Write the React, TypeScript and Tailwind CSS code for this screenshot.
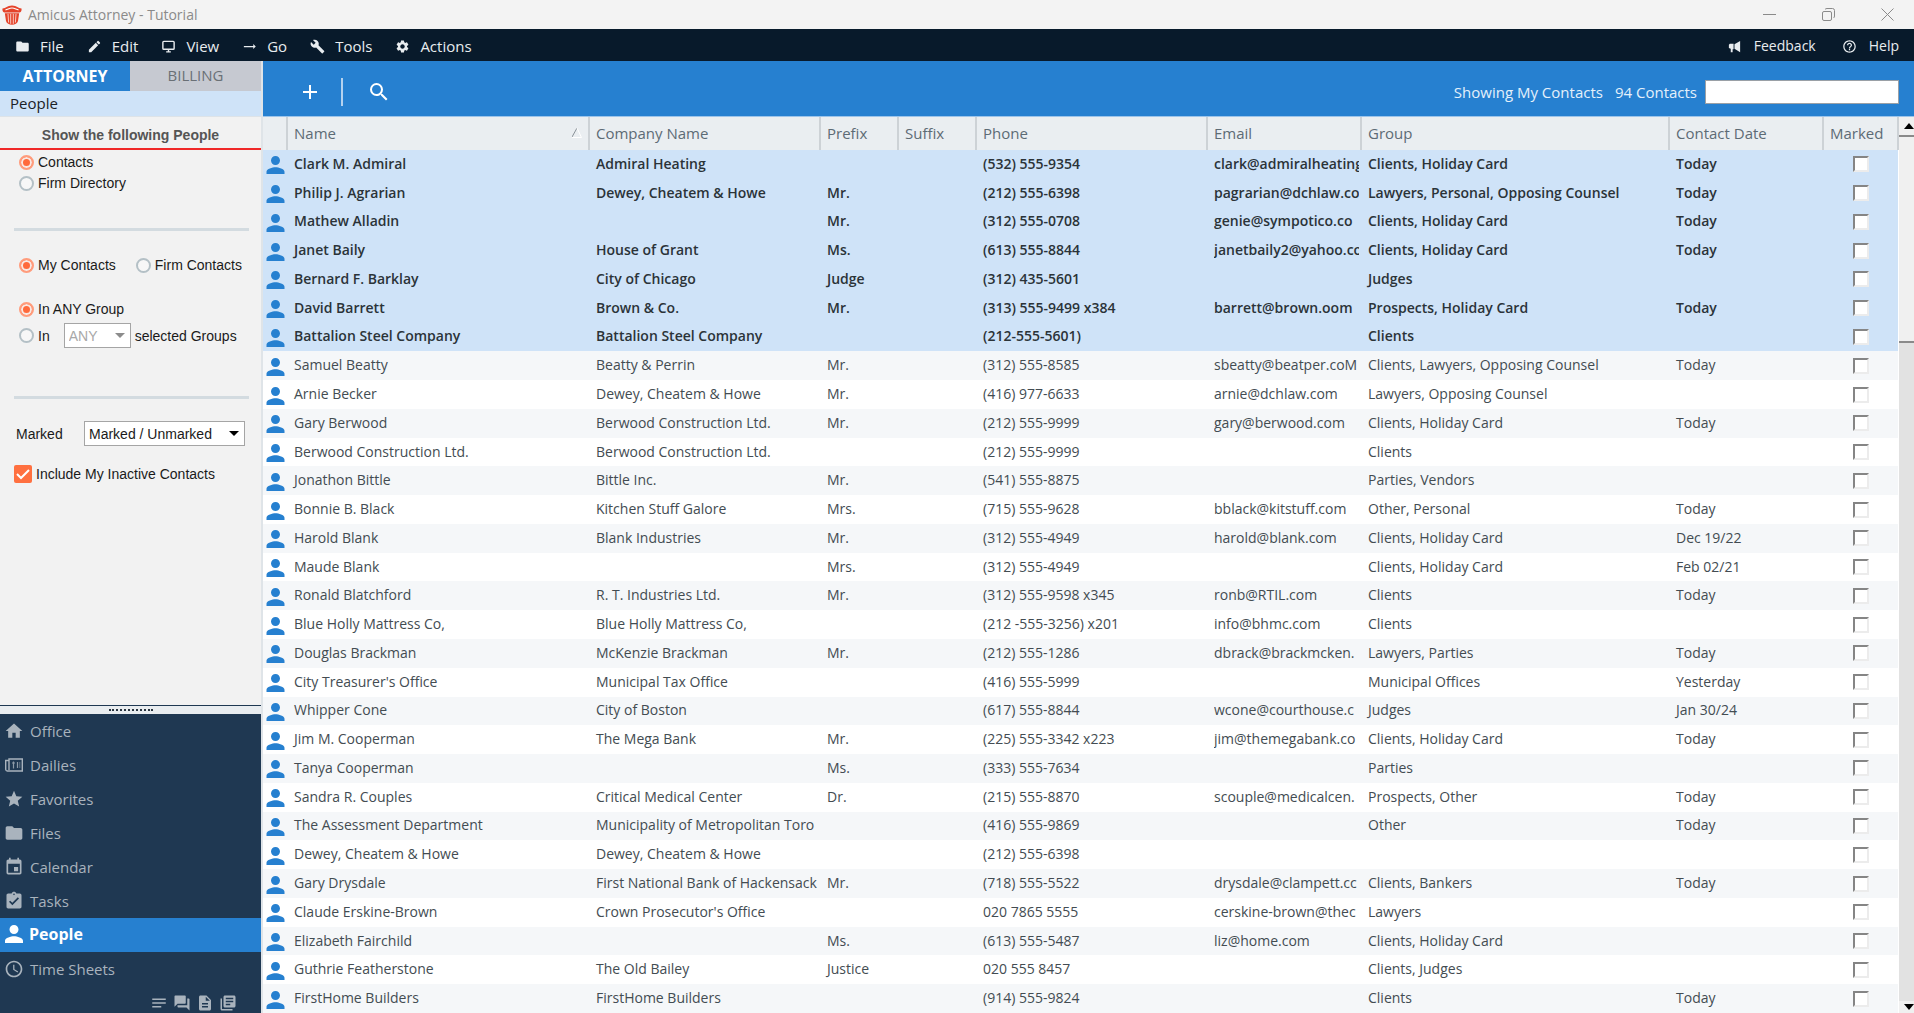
import React from "react";
import {
  MdFolder, MdEdit, MdBuild, MdSettings, MdHelpOutline, MdHome, MdStar, MdEvent,
  MdAssignmentTurnedIn, MdAccessTime, MdForum, MdDescription, MdLibraryBooks,
  MdNotes, MdAdd, MdSearch, MdTrendingFlat,
} from "react-icons/md";

const PERSON = "M12 12c2.21 0 4-1.79 4-4s-1.79-4-4-4-4 1.79-4 4 1.79 4 4 4zm0 2c-2.67 0-8 1.34-8 4v2h16v-2c0-2.66-5.33-4-8-4z";

function Person({ className }: { className: string }) {
  return (
    <svg viewBox="4 4 16 16" className={className} fill="currentColor" aria-hidden="true">
      <path d={PERSON} />
    </svg>
  );
}

function Logo() {
  return (
    <svg viewBox="0 0 20 20" className="size-5" aria-hidden="true">
      <path d="M.5 3.500C4 3.500 5 .5 10 .5s6 3 9.500 3c.4 1.800-.3 3.500-1.800 4H2.300C.8 7 .1 5.300.5 3.500z" fill="#e5432a" />
      <path d="M3.500 4.800C6 4.500 7 3 10 3s4 1.500 6.500 1.800" stroke="#fff" strokeWidth="1.200" fill="none" />
      <path d="M2.800 8.300h14.400l-1.200 7.700c-.8 2.500-3 3.700-6 3.700S4.800 18.500 4 16z" fill="#e5432a" />
      <path d="M6 8.800l.6 8.700M8.700 8.800v10M11.300 8.800v10M14 8.800l-.6 8.700" stroke="#fbd9d2" strokeWidth="0.900" />
    </svg>
  );
}

function Monitor({ className }: { className?: string }) {
  return (
    <svg viewBox="-1 -1 16 16" className={className} fill="none" stroke="currentColor" strokeWidth="1.500" aria-hidden="true">
      <rect x="1" y="1.500" width="12" height="8.500" rx="1" />
      <path d="M7 10v3M4.500 12.700h5" />
    </svg>
  );
}

function Megaphone({ className }: { className?: string }) {
  return (
    <svg viewBox="-1 -1 16 16" className={className} fill="currentColor" aria-hidden="true">
      <path d="M13 1v12L7 9.500v-5zM6 4v6H5v3H3V9.500L1 8.500v-3.500l1-1z" />
    </svg>
  );
}

function Newspaper({ className }: { className?: string }) {
  return (
    <svg viewBox="-1 -2 20 18" className={className} fill="none" stroke="currentColor" strokeWidth="1.400" aria-hidden="true">
      <path d="M4 1h13.300v12H2.500A1.700 1.700 0 0 1 .7 11.500V2.500H4V1zM4 2.500v9.500" />
      <path d="M8.500 3.500v7M7 5h3M12.500 4v6" strokeWidth="1.200" opacity=".8" />
      <path d="M14.800 4v6" strokeWidth="1" opacity=".5" />
    </svg>
  );
}

const menus = [
  { label: "File", Icon: MdFolder },
  { label: "Edit", Icon: MdEdit },
  { label: "View", Icon: Monitor },
  { label: "Go", Icon: MdTrendingFlat },
  { label: "Tools", Icon: MdBuild },
  { label: "Actions", Icon: MdSettings },
];

const nav = [
  { label: "Office", Icon: MdHome },
  { label: "Dailies", Icon: Newspaper },
  { label: "Favorites", Icon: MdStar },
  { label: "Files", Icon: MdFolder },
  { label: "Calendar", Icon: MdEvent },
  { label: "Tasks", Icon: MdAssignmentTurnedIn },
  { label: "People", Icon: Person },
  { label: "Time Sheets", Icon: MdAccessTime },
];

// name, company, prefix, phone, email, group, contact date
const contacts: string[][] = [
  ["Clark M. Admiral", "Admiral Heating", "", "(532) 555-9354", "clark@admiralheating", "Clients, Holiday Card", "Today"],
  ["Philip J. Agrarian", "Dewey, Cheatem & Howe", "Mr.", "(212) 555-6398", "pagrarian@dchlaw.co", "Lawyers, Personal, Opposing Counsel", "Today"],
  ["Mathew Alladin", "", "Mr.", "(312) 555-0708", "genie@sympotico.co", "Clients, Holiday Card", "Today"],
  ["Janet Baily", "House of Grant", "Ms.", "(613) 555-8844", "janetbaily2@yahoo.co", "Clients, Holiday Card", "Today"],
  ["Bernard F. Barklay", "City of Chicago", "Judge", "(312) 435-5601", "", "Judges", ""],
  ["David Barrett", "Brown & Co.", "Mr.", "(313) 555-9499 x384", "barrett@brown.oom", "Prospects, Holiday Card", "Today"],
  ["Battalion Steel Company", "Battalion Steel Company", "", "(212-555-5601)", "", "Clients", ""],
  ["Samuel Beatty", "Beatty & Perrin", "Mr.", "(312) 555-8585", "sbeatty@beatper.coM", "Clients, Lawyers, Opposing Counsel", "Today"],
  ["Arnie Becker", "Dewey, Cheatem & Howe", "Mr.", "(416) 977-6633", "arnie@dchlaw.com", "Lawyers, Opposing Counsel", ""],
  ["Gary Berwood", "Berwood Construction Ltd.", "Mr.", "(212) 555-9999", "gary@berwood.com", "Clients, Holiday Card", "Today"],
  ["Berwood Construction Ltd.", "Berwood Construction Ltd.", "", "(212) 555-9999", "", "Clients", ""],
  ["Jonathon Bittle", "Bittle Inc.", "Mr.", "(541) 555-8875", "", "Parties, Vendors", ""],
  ["Bonnie B. Black", "Kitchen Stuff Galore", "Mrs.", "(715) 555-9628", "bblack@kitstuff.com", "Other, Personal", "Today"],
  ["Harold Blank", "Blank Industries", "Mr.", "(312) 555-4949", "harold@blank.com", "Clients, Holiday Card", "Dec 19/22"],
  ["Maude Blank", "", "Mrs.", "(312) 555-4949", "", "Clients, Holiday Card", "Feb 02/21"],
  ["Ronald Blatchford", "R. T. Industries Ltd.", "Mr.", "(312) 555-9598 x345", "ronb@RTIL.com", "Clients", "Today"],
  ["Blue Holly Mattress Co,", "Blue Holly Mattress Co,", "", "(212 -555-3256) x201", "info@bhmc.com", "Clients", ""],
  ["Douglas Brackman", "McKenzie Brackman", "Mr.", "(212) 555-1286", "dbrack@brackmcken.", "Lawyers, Parties", "Today"],
  ["City Treasurer's Office", "Municipal Tax Office", "", "(416) 555-5999", "", "Municipal Offices", "Yesterday"],
  ["Whipper Cone", "City of Boston", "", "(617) 555-8844", "wcone@courthouse.c", "Judges", "Jan 30/24"],
  ["Jim M. Cooperman", "The Mega Bank", "Mr.", "(225) 555-3342 x223", "jim@themegabank.co", "Clients, Holiday Card", "Today"],
  ["Tanya Cooperman", "", "Ms.", "(333) 555-7634", "", "Parties", ""],
  ["Sandra R. Couples", "Critical Medical Center", "Dr.", "(215) 555-8870", "scouple@medicalcen.", "Prospects, Other", "Today"],
  ["The Assessment Department", "Municipality of Metropolitan Toro", "", "(416) 555-9869", "", "Other", "Today"],
  ["Dewey, Cheatem & Howe", "Dewey, Cheatem & Howe", "", "(212) 555-6398", "", "", ""],
  ["Gary Drysdale", "First National Bank of Hackensack", "Mr.", "(718) 555-5522", "drysdale@clampett.cc", "Clients, Bankers", "Today"],
  ["Claude Erskine-Brown", "Crown Prosecutor's Office", "", "020 7865 5555", "cerskine-brown@thec", "Lawyers", ""],
  ["Elizabeth Fairchild", "", "Ms.", "(613) 555-5487", "liz@home.com", "Clients, Holiday Card", ""],
  ["Guthrie Featherstone", "The Old Bailey", "Justice", "020 555 8457", "", "Clients, Judges", ""],
  ["FirstHome Builders", "FirstHome Builders", "", "(914) 555-9824", "", "Clients", "Today"],
];
const SELECTED = 7;

const columns = ["Name", "Company Name", "Prefix", "Suffix", "Phone", "Email", "Group", "Contact Date", "Marked"];

function Radio({ name, label, checked }: { name: string; label: string; checked?: boolean }) {
  return (
    <label className="flex items-center gap-1 whitespace-nowrap">
      <input
        type="radio"
        name={name}
        defaultChecked={checked}
        className="size-[15px] shrink-0 appearance-none rounded-full border-2 border-[#b4c0c6] bg-[#f7f7f7] checked:border-[#ff9c7c] checked:bg-[#ff6a3c] checked:shadow-[inset_0_0_0_2px_#f9e9e4]"
      />
      {label}
    </label>
  );
}

function Divider() {
  return <div className="h-[3px] bg-[#d3dbe0]" />;
}

function Sidebar() {
  return (
    <aside className="flex w-[263px] shrink-0 flex-col border-r-2 border-[#dfe4e8] bg-[#f2f2f2]">
      <div className="flex h-[30px] shrink-0">
        <button className="flex-1 bg-[#2680d0] text-base font-bold text-white">ATTORNEY</button>
        <button className="w-[131px] bg-[#c6c9d1] pb-0.5 text-[15px] text-[#6a7076]">BILLING</button>
      </div>
      <div className="flex h-[26px] shrink-0 items-center border-b border-[#dde3e8] bg-[#cfe3f8] pb-0.5 pl-2.5 text-[15px] text-[#1b2126]">People</div>
      <h2 className="flex h-[33px] shrink-0 items-center justify-center border-b-2 border-[#f02828] pt-1 font-[Liberation_Sans,sans-serif] text-[14px] font-bold text-[#555]">
        Show the following People
      </h2>
      <div className="flex-1 pr-3 pl-3.5 font-[Liberation_Sans,sans-serif] text-[14px] leading-5 text-[#1a1a1a]">
        <div className="space-y-px px-[5px] pt-0.5 pb-[35px]">
          <Radio name="source" label="Contacts" checked />
          <Radio name="source" label="Firm Directory" />
        </div>
        <Divider />
        <div className="flex gap-5 px-[5px] pt-6 pb-6">
          <Radio name="scope" label="My Contacts" checked />
          <Radio name="scope" label="Firm Contacts" />
        </div>
        <div className="px-[5px] pb-12">
          <Radio name="group" label="In ANY Group" checked />
          <div className="mt-1 flex items-center">
            <Radio name="group" label="In" />
            <div className="relative ml-3.5">
              <select disabled aria-label="Group match" className="h-[25px] w-[67px] appearance-none border border-[#a5a5a5] bg-white pl-1 text-[#a8a8a8]">
                <option>ANY</option>
              </select>
              <svg viewBox="0 0 10 5" className="pointer-events-none absolute top-2.5 right-1.5 h-[5px] w-2.5"><path d="M0 0h10L5 5z" fill="#8c8c8c" /></svg>
            </div>
            <span className="ml-1 whitespace-nowrap">selected Groups</span>
          </div>
        </div>
        <Divider />
        <div className="flex items-center justify-between pt-[22px] pr-1 pl-0.5">
          <label htmlFor="marked">Marked</label>
          <div className="relative">
            <select id="marked" className="h-[25px] w-[161px] appearance-none border border-[#a5a5a5] bg-white pl-1">
              <option>Marked / Unmarked</option>
            </select>
            <svg viewBox="0 0 10 5" className="pointer-events-none absolute top-2.5 right-1.5 h-[5px] w-2.5"><path d="M0 0h10L5 5z" fill="#000" /></svg>
          </div>
        </div>
        <label className="mt-[18px] flex items-center gap-1 whitespace-nowrap">
          <span className="relative flex">
            <input type="checkbox" defaultChecked className="size-[18px] appearance-none rounded-xs bg-[#ff7040]" />
            <svg viewBox="0 0 18 18" className="pointer-events-none absolute inset-0" fill="none" stroke="#fff" strokeWidth="2"><path d="M3 9l4 4 8-8" /></svg>
          </span>
          Include My Inactive Contacts
        </label>
      </div>
      <div className="flex h-[9px] shrink-0 items-center justify-center border-t border-[#1f3852] bg-[#e9edf0]">
        <div className="w-11 border-t-2 border-dotted border-[#2a3540]" />
      </div>
      <nav className="shrink-0 bg-[#1f3852]">
        {nav.map(({ label, Icon }) =>
          label === "People" ? (
            <a key={label} href="#people" className="flex h-[34px] items-center gap-1.5 bg-[#2680d0] pb-0.5 pl-[5px] text-base font-bold text-white">
              <Icon className="size-[18px]" />
              {label}
            </a>
          ) : (
            <a key={label} href="#section" className="flex h-[34px] items-center gap-1.5 pb-px pl-1 text-[15px] text-[#a9b3bd]">
              <Icon className="size-5" />
              {label}
            </a>
          ),
        )}
        <div className="flex h-[27px] items-center justify-end gap-[5px] pt-1.5 pr-6 text-[#a9b3bd]">
          <button aria-label="Notes"><MdNotes className="size-[18px]" /></button>
          <button aria-label="Messages"><MdForum className="size-[18px]" /></button>
          <button aria-label="Documents"><MdDescription className="size-[18px]" /></button>
          <button aria-label="Library"><MdLibraryBooks className="size-[18px]" /></button>
        </div>
      </nav>
    </aside>
  );
}

function ContactTable() {
  const cell = "overflow-hidden pb-px pl-[7px] whitespace-nowrap";
  return (
    <table className="h-full w-full table-fixed border-collapse">
      <colgroup>
        <col className="w-6" />
        <col className="w-[302px]" />
        <col className="w-[231px]" />
        <col className="w-[78px]" />
        <col className="w-[78px]" />
        <col className="w-[231px]" />
        <col className="w-[154px]" />
        <col />
        <col className="w-[154px]" />
        <col className="w-[75px]" />
      </colgroup>
      <thead>
        <tr className="h-[33px] bg-[#eaeef1] text-left text-[15px] text-[#5d6b75]">
          <th aria-label="Type" className="border-r-2 border-[#cdd2d6]" />
          {columns.map((c) => (
            <th key={c} className="border-r-2 border-[#cdd2d6] pb-0.5 pl-1.5 font-normal whitespace-nowrap">
              <div className="flex items-center justify-between pr-1.5">
                {c}
                {c === "Name" && (
                  <svg viewBox="0 0 10 10" className="size-2.5" fill="none"><path d="M5 0L0 9" stroke="#8a9298" /><path d="M5 0l4.500 9.500H0" stroke="#fff" /></svg>
                )}
              </div>
            </th>
          ))}
        </tr>
      </thead>
      <tbody>
        {contacts.map(([name, company, prefix, phone, email, group, date], i) => (
          <tr
            key={i}
            className={
              i < SELECTED
                ? "bg-[#cfe3f8] font-semibold text-[#2b3338]"
                : "text-[#434c52] odd:bg-white even:bg-[#f5f7f9]"
            }
          >
            <td className="pl-[3px] text-[#2680d0]"><Person className="mt-0.5 h-[18px] w-[19px]" /></td>
            <td className={cell}>{name}</td>
            <td className={cell}>{company}</td>
            <td className={cell}>{prefix}</td>
            <td />
            <td className={cell}>{phone}</td>
            <td className={cell}><div className="mr-0.5 overflow-hidden">{email}</div></td>
            <td className={cell}>{group}</td>
            <td className={cell}>{date}</td>
            <td>
              <input
                type="checkbox"
                aria-label={"Mark " + name}
                className="mx-auto block size-4 appearance-none border-2 border-t-[#858585] border-r-[#ececec] border-b-[#ececec] border-l-[#858585] bg-white"
              />
            </td>
          </tr>
        ))}
      </tbody>
    </table>
  );
}

export default function App() {
  return (
    <div className="flex h-screen flex-col overflow-hidden bg-white font-[Open_Sans,sans-serif] text-[14px] leading-5">
      <header className="flex h-[29px] shrink-0 items-center justify-between bg-[#f3f3f3] pr-5 pl-0.5 text-[#8a8a8a]">
        <div className="flex items-center gap-1.5">
          <Logo />
          Amicus Attorney - Tutorial
        </div>
        <div className="flex items-center gap-[46px]">
          <button aria-label="Minimize"><svg viewBox="0 0 13 13" className="size-[13px]" stroke="currentColor"><path d="M0 6.500h13" /></svg></button>
          <button aria-label="Restore"><svg viewBox="0 0 13 13" className="size-[13px]" stroke="currentColor" fill="none"><rect x=".5" y="3.500" width="9" height="9" rx="1.500" /><path d="M3 1.500c.5-.7 1-1 2-1h5.500a2 2 0 0 1 2 2V8c0 1-.3 1.500-1 2" /></svg></button>
          <button aria-label="Close"><svg viewBox="0 0 13 13" className="size-[13px]" stroke="currentColor"><path d="M.5.5l12 12M12.500.5l-12 12" /></svg></button>
        </div>
      </header>
      <nav className="flex h-8 shrink-0 items-center justify-between bg-[#081a2b] pt-0.5 pr-[15px] pl-[15px] text-[15px] text-[#e8ecef]">
        <div className="flex gap-[23px]">
          {menus.map(({ label, Icon }) => (
            <button key={label} className="flex items-center gap-2.5">
              <Icon className="size-[15px]" />
              {label}
            </button>
          ))}
        </div>
        <div className="flex gap-[26px] text-[14px]">
          <button className="flex items-center gap-3"><Megaphone className="size-[15px]" />Feedback</button>
          <button className="flex items-center gap-3"><MdHelpOutline className="size-[15px]" />Help</button>
        </div>
      </nav>
      <div className="flex min-h-0 flex-1">
        <Sidebar />
        <main className="flex min-w-0 flex-1 flex-col">
          <div className="flex h-14 shrink-0 items-center border-b border-[#9cc4ea] bg-[#2680d0] pt-1.5 pr-[15px] pl-[35px] text-[15px] text-[#e4f0fb]">
            <button aria-label="Add contact"><MdAdd className="size-6 text-white" /></button>
            <div className="ml-[19px] h-7 w-0.5 bg-[#b4d2ef]" />
            <button aria-label="Find" className="ml-6"><MdSearch className="size-6 text-white" /></button>
            <span className="ml-auto">Showing My Contacts</span>
            <span className="ml-3">94 Contacts</span>
            <input aria-label="Search contacts" className="ml-2 h-6 w-[194px] border border-[#9aa0a6] bg-white px-1 text-black" />
          </div>
          <div className="flex min-h-0 flex-1">
            <div className="min-w-0 flex-1 overflow-hidden"><ContactTable /></div>
            <div className="flex w-[15px] shrink-0 flex-col bg-[#e2e2e2] text-black">
              <button aria-label="Scroll up" className="flex h-5 items-center justify-end border-b-2 border-[#8a8a8a] bg-[#f0f0f0]"><svg viewBox="0 0 10 6" className="h-1.5 w-2.5"><path d="M0 6h10L5 0z" /></svg></button>
              <div className="h-[206px] border-b-2 border-[#8a8a8a] bg-[#f0f0f0]" />
              <button aria-label="Scroll down" className="mt-auto flex h-3 items-center justify-end bg-[#f0f0f0]"><svg viewBox="0 0 10 6" className="h-1.5 w-2.5"><path d="M0 0h10L5 6z" /></svg></button>
            </div>
          </div>
        </main>
      </div>
    </div>
  );
}
